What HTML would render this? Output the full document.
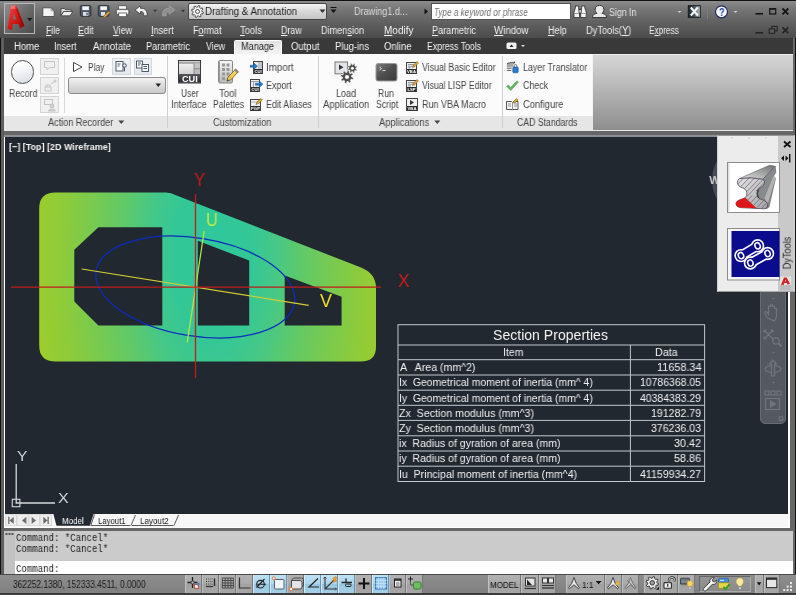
<!DOCTYPE html>
<html><head><meta charset="utf-8"><title>AutoCAD</title>
<style>
*{box-sizing:border-box;margin:0;padding:0}
html,body{width:796px;height:595px;overflow:hidden;background:#3c3c3c;font-family:"Liberation Sans",sans-serif;font-size:10px;}
#root{position:relative;width:796px;height:595px;overflow:hidden;background:#666}
#root>div,#root>svg{position:absolute}
.t{position:absolute;white-space:pre;line-height:1;transform-origin:0 50%;will-change:transform;}
#title{left:0;top:0;width:796px;height:38px;background:linear-gradient(#111 0,#111 1.500px,#8a8a8a 1.500px,#797979 8px,#646464 20px,#565656 30px,#4c4c4c 38px)}
#tabs{left:0;top:38px;width:796px;height:16px;background:#393939}
#ribbon{left:3.500px;top:54px;width:589.500px;height:76px;background:#fbfbfb}
#ribbonrest{left:592px;top:54px;width:200.500px;height:76.500px;background:linear-gradient(#d6d6d6,#b2b2b2 50%,#8e8e8e);border-left:1.500px solid #f4f4f4;border-top:1px solid #eee;border-bottom:1px solid #e4e4e4}
#ptitles{left:3.500px;top:116px;width:589.500px;height:14px;background:#e6e6e6}
.vsep{width:1px;background:#cfcfcf;top:56px;height:72px}
#strip{left:0;top:130px;width:796px;height:5px;background:#666;border-top:1px solid #e8e8e8}
#frame{left:4px;top:134.500px;width:786px;height:393.500px;background:#fff;border-top:2px solid #8c9094}
#draw{left:5px;top:136.500px;width:783px;height:377.500px;background:#212830;overflow:hidden}
#rightedge{left:790px;top:131px;width:6px;height:444px;background:#666;border-right:1px solid #111}
#ltabs{left:5px;top:514px;width:783px;height:12.500px;background:#f7f7f7}
#cmdhist{left:4px;top:531px;width:789px;height:30px;background:#cbcbcb}
#cmdgrip{left:4px;top:531px;width:11px;height:44px;background:#c2c2c2}
#cmdline{left:15px;top:561px;width:778px;height:14px;background:#fff}
#status{left:0;top:575px;width:796px;height:20px;background:linear-gradient(#8e8e8e,#868686 50%,#7e7e7e)}
.sb{top:575px;width:17px;height:17.500px;border-right:1px solid #787878;border-left:1px solid #c0c0c0;background:linear-gradient(#b2b2b2,#aaa 48%,#a2a2a2 52%,#a6a6a6);}
.sb.on{background:linear-gradient(#bfe0f2,#aed6ec 48%,#98c8e0 52%,#a4d0e6);border-right-color:#6a94b0;border-left-color:#d4ecf8}
.rb{border:1px solid #d4d4d4;background:#f0f0f0}
</style></head><body>
<div id="root">
<div id="title"></div>
<div id="tabs"></div>
<div id="ribbon"></div>
<div id="ribbonrest"></div>
<div id="ptitles"></div>
<div class="vsep" style="left:167px"></div>
<div class="vsep" style="left:318px"></div>
<div class="vsep" style="left:502px"></div>
<div id="strip"></div>
<div id="frame"></div>
<div id="draw"></div>
<div id="rightedge"></div>
<div id="ltabs"></div>
<div id="cmdhist"></div>
<div id="cmdgrip"></div>
<div id="cmdline"></div>
<div id="status"></div>
<div style="left:793px;top:38px;width:3px;height:537px;background:#686868;border-right:1px solid #111"></div>
<div style="left:0;top:38px;width:3.500px;height:537px;background:#5e5e5e;border-left:1px solid #111"></div>
<div style="left:4px;top:3px;width:31px;height:31px;border:1px solid #b8b8b8;background:linear-gradient(135deg,#909090,#6a6a6a 50%,#4c4c4c)"></div>
<svg style="left:5px;top:4px" width="29" height="29" viewBox="0 0 29 29">
<defs><linearGradient id="ag" x1="0" y1="0" x2="1" y2="1"><stop offset="0" stop-color="#f05050"/><stop offset="0.5" stop-color="#d81818"/><stop offset="1" stop-color="#8c0808"/></linearGradient></defs>
<path d="M6 1.600 L11.300 1.600 L19.500 22 L15 24.500 L13.300 20 L7.800 20 L7 26 L2.500 25 Z M8.700 9.500 L8 15.500 L11.700 15.500 Z" fill="url(#ag)" fill-rule="evenodd"/>
<path d="M6 1.600 L11.300 1.600 L12.500 4.500 L5.600 5 Z" fill="#ff9a9a" opacity=".55"/>
<path d="M11.300 1.600 L19.500 22 L17.500 23 L10 3z" fill="#7a0606" opacity=".45"/>
<path d="M22 14 h5.500 l-2.750 3.200z" fill="#1a1a1a"/>
</svg>
<div style="left:188px;top:3px;width:139px;height:17px;border:1px solid #444;border-radius:2px;background:linear-gradient(#f4f4f4,#d8d8d8 50%,#c4c4c4)"></div>
<svg style="left:190.5px;top:5px" width="13" height="13" viewBox="0 0 13 13"><path d="M10.90 6.50 L12.44 7.35 L12.04 8.80 L10.29 8.74 L9.61 9.61 L10.10 11.30 L8.80 12.04 L7.59 10.76 L6.50 10.90 L5.65 12.44 L4.20 12.04 L4.26 10.29 L3.39 9.61 L1.70 10.10 L0.96 8.80 L2.24 7.59 L2.10 6.50 L0.56 5.65 L0.96 4.20 L2.71 4.26 L3.39 3.39 L2.90 1.70 L4.20 0.96 L5.41 2.24 L6.50 2.10 L7.35 0.56 L8.80 0.96 L8.74 2.71 L9.61 3.39 L11.30 2.90 L12.04 4.20 L10.76 5.41Z" fill="#f4f4f4" stroke="#505050" stroke-width="1" stroke-linejoin="round"/><circle cx="6.5" cy="6.5" r="2" fill="#f4f4f4" stroke="#505050" stroke-width="1"/></svg>
<svg style="left:319px;top:9px" width="8" height="5"><path d="M0.5 0.5h6l-3 3.5z" fill="#333"/></svg>
<svg style="left:330px;top:7px" width="8" height="8"><path d="M0.5 0.5h6" stroke="#111" stroke-width="1"/><path d="M0.5 2.5h6l-3 3.5z" fill="#111"/></svg>
<svg style="left:424px;top:8px" width="5" height="8"><path d="M0.5 0.5v6l3.5-3z" fill="#111"/></svg>
<div style="left:431px;top:3px;width:139.500px;height:17px;border:1px solid #555;background:#fff"></div>
<svg style="left:40px;top:3px" width="145" height="18" viewBox="40 3 145 18">
<path d="M42.800 7.800h8.200l3.200 3v5.700h-11.400z" fill="#f4f4f4" stroke="#4a4a4a" stroke-width=".9"/><path d="M51 7.800v3h3.200" fill="none" stroke="#777" stroke-width=".7"/>
<path d="M61 8.500h3.500l1 1.200h5.500v1.800h-7.500l-2.500 4.300z" fill="#dcdcdc" stroke="#3c3c3c" stroke-width=".8"/><path d="M63.800 11.500h9l-2.800 4.300h-9z" fill="#f0f0f0" stroke="#3c3c3c" stroke-width=".8"/>
<rect x="80.300" y="5.500" width="10.600" height="10.800" rx="1.300" fill="#4e5868" stroke="#2c3038" stroke-width=".9"/><rect x="82.300" y="6.300" width="6.600" height="3.800" fill="#f4f4f4"/><rect x="83" y="12" width="5.400" height="3.800" fill="#e0e0e0"/><rect x="86.300" y="12.700" width="1.400" height="2.400" fill="#4e5868"/>
<rect x="98.300" y="5.500" width="10.600" height="10.800" rx="1.300" fill="#4e5868" stroke="#2c3038" stroke-width=".9"/><rect x="100.300" y="6.300" width="6.600" height="3.800" fill="#f4f4f4"/><rect x="101" y="12" width="4" height="3.800" fill="#e0e0e0"/><path d="M103.500 17.500l0.600-2 4.500-4.300 1.400 1.400-4.500 4.300z" fill="#e8a848" stroke="#7a5a20" stroke-width=".5"/>
<rect x="118.500" y="5.800" width="8" height="4" fill="#f8f8f8" stroke="#444" stroke-width=".7"/><rect x="116.300" y="9.300" width="12.600" height="5.200" rx="1.300" fill="#e4e4e4" stroke="#3a3a3a" stroke-width=".8"/><path d="M117 11.500h11" stroke="#fff" stroke-width="1"/><rect x="118.800" y="13" width="7.500" height="3.700" fill="#fff" stroke="#444" stroke-width=".7"/>
<path d="M135 10l5.500-4.200v2.500c4.800 0 7 2.400 6.600 7.500h-3.300c0.200-3.200-0.800-4.300-3.300-4.300v2.600z" fill="#f2f2f2" stroke="#3c3c3c" stroke-width=".8"/>
<path d="M153 9.800h4.200l-2.100 2.500z" fill="#3a3a3a"/>
<path d="M174.800 10l-5.500-4.200v2.500c-4.800 0-7 2.400-6.600 7.500h3.300c-0.200-3.200 0.800-4.300 3.300-4.300v2.600z" fill="#8e8e8e" stroke="#a4a4a4" stroke-width=".8"/>
<path d="M181 9.800h4.200l-2.100 2.500z" fill="#3a3a3a"/>
</svg>
<svg style="left:570px;top:2px" width="226" height="36" viewBox="570 2 226 36">
<g fill="#f4f4f4" stroke="#2c2c2c" stroke-width=".8"><path d="M574 17.500v-5.500l1.500-4.500v-1.500h3v1.500l1 4v6z"/><path d="M586.200 17.500v-5.500l-1.500-4.500v-1.500h-3v1.500l-1 4v6z"/><rect x="579" y="9.500" width="2.200" height="3.500"/></g><path d="M574.500 13.500h4.500M581.200 13.500h4.500" stroke="#888" stroke-width=".8"/>
<path d="M592.500 17.500c0-2.800 1.800-3.600 4.500-4.200-1.200-1-1.800-2.300-1.800-3.900 0-2.400 1.600-4 4.300-4s4.300 1.600 4.300 4c0 1.600-.6 2.900-1.800 3.900 2.700.6 4.500 1.400 4.500 4.200z" fill="#e8e8e8" stroke="#2c2c2c" stroke-width=".9"/>
<path d="M677.500 11h4l-2 2z" fill="#d0d0d0"/>
<defs><linearGradient id="xg" x1="0" y1="0" x2="1" y2="0"><stop offset="0" stop-color="#1e2a32"/><stop offset="0.45" stop-color="#42525c"/><stop offset="1" stop-color="#b8c4cc"/></linearGradient></defs>
<rect x="688.300" y="5.700" width="12" height="11.600" fill="url(#xg)" stroke="#1a1a1a" stroke-width="1"/><path d="M690.800 7.500l7 8M697.800 7.500l-7 8" stroke="#fafafa" stroke-width="2"/>
<path d="M707.500 5v14" stroke="#7c7c7c" stroke-width="1"/>
<circle cx="721.500" cy="11.800" r="6" fill="#f6f6f6" stroke="#1c2a5c" stroke-width="1.200"/>
<path d="M733.500 11h4l-2 2z" fill="#d0d0d0"/>
<path d="M755.500 13.800h7.500" stroke="#1a1a1a" stroke-width="1.800"/>
<rect x="769.700" y="8.700" width="6" height="5.300" fill="none" stroke="#1a1a1a" stroke-width="1.300"/><path d="M769.700 8.900h6" stroke="#1a1a1a" stroke-width="1.800"/>
<path d="M782.500 8.500l5.800 5.800M788.300 8.500l-5.800 5.800" stroke="#161616" stroke-width="1.900"/>
<path d="M755.500 32.800h7.500" stroke="#242424" stroke-width="1.700"/>
<rect x="771.800" y="26.300" width="5.400" height="4.500" fill="none" stroke="#242424" stroke-width="1.100"/><rect x="769.200" y="28.800" width="5.400" height="4.500" fill="#5a5a5a" stroke="#242424" stroke-width="1.100"/>
<path d="M782.500 27.300l5.800 5.800M788.300 27.300l-5.800 5.800" stroke="#242424" stroke-width="1.700"/>
</svg>
<div style="left:234px;top:40px;width:48px;height:14px;background:linear-gradient(#e0e0e0,#f4f4f4);border:1px solid #fff;border-bottom:none;border-radius:2px 2px 0 0"></div>
<svg style="left:506px;top:42px" width="22" height="8" viewBox="0 0 22 8"><rect x="0.500" y="0.500" width="10" height="6.500" rx="1.500" fill="#f0f0f0"/><path d="M3.500 5l2-2.500 2 2.500z" fill="#222"/><path d="M15 3h4l-2 2z" fill="#ddd"/></svg>
<div style="left:10.800px;top:60px;width:23.600px;height:23.600px;border-radius:50%;border:1.700px solid #505050;background:linear-gradient(160deg,#fff 20%,#eef0f4 55%,#d4d8e0)"></div>
<div class="rb" style="left:40.300px;top:58.3px;width:18.500px;height:17px"></div>
<div class="rb" style="left:40.300px;top:77px;width:18.500px;height:17px"></div>
<div class="rb" style="left:40.300px;top:95.8px;width:18.500px;height:17px"></div>
<svg style="left:41px;top:58px" width="17" height="55" viewBox="41 58 17 55" fill="none" stroke="#c4c4c4" stroke-width="1">
<path d="M44.500 61.500h10v6h-5l-2.500 2.500v-2.500h-2.500z"/>
<path d="M45 87h6v4h-6zM46 87v-2h4v2M51 84l4-3"/><circle cx="55" cy="81" r="1"/>
<rect x="44.500" y="99.500" width="8" height="5"/><circle cx="52" cy="106" r="2" fill="#d0d0d0"/><path d="M48.500 111c0-2.500 7-2.500 7 0z" fill="#d0d0d0"/>
</svg>
<div style="left:63.500px;top:58px;width:1px;height:55px;background:#d8d8d8"></div>
<svg style="left:72px;top:61px" width="12" height="12" viewBox="0 0 12 12"><path d="M1.500 1.500v9l8.500-4.500z" fill="#fff" stroke="#444" stroke-width="1"/></svg>
<div style="left:112px;top:58px;width:18.500px;height:17px;border:1px solid #d2d8de;background:linear-gradient(#f0f3f6,#e4e9ee)"></div>
<div style="left:133.5px;top:58px;width:18.500px;height:17px;border:1px solid #d2d8de;background:linear-gradient(#f0f3f6,#e4e9ee)"></div>
<svg style="left:112px;top:58px" width="40" height="17" viewBox="112 58 40 17" fill="none" stroke="#3a4a5a" stroke-width=".9">
<rect x="116" y="61.500" width="7" height="9.500" fill="#fff"/><path d="M117.500 64h3M117.500 66h2"/><circle cx="124.500" cy="65.500" r="1.800" fill="#dfe6ec"/><path d="M124.500 67.300v4"/>
<rect x="136.500" y="61" width="6" height="7" fill="#fff"/><rect x="142" y="64.500" width="6.500" height="7" fill="#fff"/><path d="M138 63h3M138 65h2M143.500 66.500h3.500M143.500 68.500h3.500"/>
</svg>
<div style="left:68px;top:77px;width:98px;height:16.500px;border:1px solid #8c8c8c;border-radius:3px;background:linear-gradient(#f2f2f2,#dcdcdc 50%,#c8c8c8)"></div>
<svg style="left:155px;top:83px" width="7" height="5"><path d="M0.500 0.500h5.500l-2.750 3.500z" fill="#222"/></svg>
<svg style="left:118px;top:120px" width="7" height="5"><path d="M0.300 0.500h6l-3 3.500z" fill="#444"/></svg>
<svg style="left:176px;top:58px" width="90" height="56" viewBox="176 58 90 56">
<defs><linearGradient id="cg" x1="0" y1="0" x2="0" y2="1"><stop offset="0" stop-color="#f8f8f8"/><stop offset="1" stop-color="#b8b8b8"/></linearGradient></defs>
<rect x="178.500" y="60.500" width="22" height="22.500" fill="url(#cg)" stroke="#3a3a3a" stroke-width="1"/>
<rect x="179" y="61" width="21" height="1.800" fill="#d0d0d0"/>
<path d="M179 63h21" stroke="#555" stroke-width=".8"/>
<rect x="194.300" y="63.400" width="5.700" height="5" fill="#c4c4c4"/><rect x="194.300" y="69" width="5.700" height="5" fill="#bcbcbc"/>
<path d="M194 63.400v10.600M194 68.700h6" stroke="#777" stroke-width=".8" fill="none"/>
<rect x="179" y="74" width="21" height="8.500" fill="url(#cb)"/>
<defs><linearGradient id="cb" x1="0" y1="0" x2="0" y2="1"><stop offset="0" stop-color="#55585c"/><stop offset="1" stop-color="#26282c"/></linearGradient></defs>
<rect x="218.500" y="60.500" width="14" height="22.500" rx="1.500" fill="url(#cg)" stroke="#8a8a8a" stroke-width="1"/>
<path d="M219.500 61.500v20.500" stroke="#9a9a9a" stroke-width="1"/>
<g fill="#989898"><rect x="222" y="63.500" width="3" height="3"/><rect x="226.500" y="63.500" width="3" height="3"/><rect x="222" y="68" width="3" height="3"/><rect x="226.500" y="68" width="3" height="3"/><rect x="222" y="72.500" width="3" height="3"/><rect x="226.500" y="72.500" width="3" height="3"/><rect x="222" y="77" width="3" height="3"/></g>
<path d="M227 81l1-3.800 7.500-8 2.800 2.600-7.500 8z" fill="#f0d058" stroke="#6a5420" stroke-width=".8"/><path d="M229 76.200l2.800 2.600" stroke="#b89030" stroke-width=".6"/><path d="M227 81l.5-2 1.500 1.400z" fill="#333"/><path d="M234.500 70.200l2.800 2.600 1-1.100-2.800-2.600z" fill="#9a9a9a" stroke="#555" stroke-width=".5"/>
</svg>
<svg style="left:250px;top:60.5px;will-change:transform" width="13" height="13" viewBox="0 0 13 13"><rect x="3.500" y="0.500" width="9" height="12" fill="#e8ecf0" stroke="#444" stroke-width="1"/><path d="M9 1v7M11 1v7" stroke="#8a9098" stroke-width=".8"/><rect x="4" y="8" width="8" height="4.500" fill="#2a2a2a"/><text x="8" y="12" text-anchor="middle" font-family="'Liberation Sans',sans-serif" font-weight="bold" font-size="4.2" fill="#fff">CUI</text><path d="M0 4.200h4v-2l3.500 3-3.500 3v-2h-4z" fill="#2a7ad0" stroke="#14508c" stroke-width=".5"/></svg>
<svg style="left:250px;top:78.7px;will-change:transform" width="13" height="13" viewBox="0 0 13 13"><rect x="0.500" y="0.500" width="9" height="12" fill="#e8ecf0" stroke="#444" stroke-width="1"/><path d="M1 2.500h8M3.500 2.500v5.500" stroke="#8a9098" stroke-width=".8"/><rect x="1" y="8" width="8" height="4.500" fill="#2a2a2a"/><text x="5" y="12" text-anchor="middle" font-family="'Liberation Sans',sans-serif" font-weight="bold" font-size="4.2" fill="#fff">CUI</text><path d="M5.500 4.200h4v-2l3.500 3-3.500 3v-2h-4z" fill="#2a7ad0" stroke="#14508c" stroke-width=".5"/></svg>
<svg style="left:250px;top:97.5px;will-change:transform" width="13" height="13" viewBox="0 0 13 13"><rect x="0.500" y="1.500" width="10" height="11" fill="#eef0f2" stroke="#444" stroke-width="1"/><path d="M1 4h9" stroke="#a0a4a8" stroke-width=".8"/><rect x="1" y="8" width="9" height="4.500" fill="#2a2a2a"/><text x="5.5" y="12" text-anchor="middle" font-family="'Liberation Sans',sans-serif" font-weight="bold" font-size="4.2" fill="#fff">PGP</text><path d="M6 6.500l1-2.500 4-3.500 1.500 1.500-4 3.500z" fill="#e8a838" stroke="#6a4a18" stroke-width=".5"/></svg>
<svg style="left:332px;top:58px" width="70" height="28" viewBox="332 58 70 28">
<rect x="335" y="62" width="12.500" height="11.800" fill="#e2e6ea" stroke="#777" stroke-width="1"/><path d="M339 64.500v5.500l4.500-2.750z" fill="#333"/>
<path d="M355.73 68.88 L357.16 69.73 L356.55 70.99 L354.99 70.40 L354.28 71.03 L354.69 72.65 L353.36 73.11 L352.68 71.59 L351.72 71.53 L350.87 72.96 L349.61 72.35 L350.20 70.79 L349.57 70.08 L347.95 70.49 L347.49 69.16 L349.01 68.48 L349.07 67.52 L347.64 66.67 L348.25 65.41 L349.81 66.00 L350.52 65.37 L350.11 63.75 L351.44 63.29 L352.12 64.81 L353.08 64.87 L353.93 63.44 L355.19 64.05 L354.60 65.61 L355.23 66.32 L356.85 65.91 L357.31 67.24 L355.79 67.92Z" fill="#4c4c4c" stroke="#fbfbfb" stroke-width=".6"/><circle cx="352.400" cy="68.200" r="1.500" fill="#fbfbfb"/>
<path d="M351.60 77.00 L353.56 77.72 L353.10 79.53 L351.03 79.22 L350.25 80.25 L351.13 82.15 L349.53 83.10 L348.28 81.42 L347.00 81.60 L346.28 83.56 L344.47 83.10 L344.78 81.03 L343.75 80.25 L341.85 81.13 L340.90 79.53 L342.58 78.28 L342.40 77.00 L340.44 76.28 L340.90 74.47 L342.97 74.78 L343.75 73.75 L342.87 71.85 L344.47 70.90 L345.72 72.58 L347.00 72.40 L347.72 70.44 L349.53 70.90 L349.22 72.97 L350.25 73.75 L352.15 72.87 L353.10 74.47 L351.42 75.72Z" fill="#4c4c4c" stroke="#fbfbfb" stroke-width=".6"/><circle cx="347" cy="77" r="2.100" fill="#fbfbfb"/>
<defs><linearGradient id="rs" x1="0" y1="0" x2="1" y2="1"><stop offset="0" stop-color="#7c7c7c"/><stop offset="0.500" stop-color="#4e4e4e"/><stop offset="1" stop-color="#3a3a3a"/></linearGradient></defs>
<rect x="376" y="63.500" width="21" height="17.500" rx="2" fill="url(#rs)" stroke="#9a9a9a" stroke-width="1"/>
<path d="M379.500 67l2 1.500-2 1.500M382.500 70.500h3" stroke="#eee" stroke-width=".9" fill="none"/>
</svg>
<svg style="left:405.5px;top:60.5px;will-change:transform" width="13" height="13" viewBox="0 0 13 13"><rect x="0.500" y="1.500" width="10" height="11" fill="#eef0f2" stroke="#444" stroke-width="1"/><path d="M2 3.500h6M2 5.200h5M2 6.800h3" stroke="#70747a" stroke-width=".7"/><rect x="1" y="8" width="9" height="4.500" fill="#2a2a2a"/><text x="5.5" y="12" text-anchor="middle" font-family="'Liberation Sans',sans-serif" font-weight="bold" font-size="4.2" fill="#fff">VBA</text><path d="M6.500 6.500l1-2.500 3.500-3.500 1.500 1.500-3.500 3.500z" fill="#e8a838" stroke="#6a4a18" stroke-width=".5"/></svg>
<svg style="left:405.5px;top:78.7px;will-change:transform" width="13" height="13" viewBox="0 0 13 13"><rect x="0.500" y="1.500" width="10" height="11" fill="#eef0f2" stroke="#444" stroke-width="1"/><path d="M2 3.500h6M2 5.200h5M2 6.800h3" stroke="#70747a" stroke-width=".7"/><rect x="1" y="8" width="9" height="4.500" fill="#2a2a2a"/><text x="5.5" y="12" text-anchor="middle" font-family="'Liberation Sans',sans-serif" font-weight="bold" font-size="4.2" fill="#fff">LSP</text><path d="M6.500 6.500l1-2.500 3.500-3.500 1.500 1.500-3.500 3.500z" fill="#e8a838" stroke="#6a4a18" stroke-width=".5"/></svg>
<svg style="left:405.5px;top:97.5px;will-change:transform" width="13" height="13" viewBox="0 0 13 13"><rect x="0.500" y="0.500" width="11" height="12" fill="#eef0f2" stroke="#444" stroke-width="1"/><rect x="1" y="8" width="10" height="4.500" fill="#2a2a2a"/><text x="6" y="12" text-anchor="middle" font-family="'Liberation Sans',sans-serif" font-weight="bold" font-size="4.2" fill="#fff">VBA</text><path d="M4 2v5l4-2.500z" fill="#333"/></svg>
<svg style="left:434px;top:120px" width="7" height="5"><path d="M0.300 0.500h6l-3 3.500z" fill="#444"/></svg>
<svg style="left:506.3px;top:60.5px;will-change:transform" width="13" height="13" viewBox="0 0 13 13"><path d="M2.500 2l6.500-1-1.500 2h-6.500zM0.800 5h6.500M0.800 7.200h5M0.800 9.400h4.500" stroke="#444" stroke-width=".9" fill="none"/><rect x="6.800" y="6" width="5.400" height="5.800" rx="1" fill="#2a7ad0" stroke="#14508c" stroke-width=".6"/><path d="M8.200 6v-1.200a1.300 1.300 0 0 1 2.600 0v1.200" fill="none" stroke="#555" stroke-width=".8"/></svg>
<svg style="left:506.3px;top:78.7px;will-change:transform" width="13" height="13" viewBox="0 0 13 13"><path d="M0.800 7.400l1.500-1.500 2.500 2.600 6.200-6.700 1.300 1.300-7.500 8.500z" fill="#5cba5c" stroke="#3c8a3c" stroke-width=".5"/></svg>
<svg style="left:506.3px;top:97.5px;will-change:transform" width="13" height="13" viewBox="0 0 13 13"><path d="M0.500 3.500h5l1 1 1-1h4.500v8h-5l-0.500 0.700-0.500-0.700h-5.500z" fill="#f4f4f4" stroke="#444" stroke-width=".9"/><path d="M2 6h3M2 8h3M8 6h3M8 8h3M6.500 4.500v7" stroke="#666" stroke-width=".7"/><path d="M7.500 5l0.500-2 2.500-2.500 1.500 1.500-2.500 2.500z" fill="#e8a030" stroke="#6a4a18" stroke-width=".5"/></svg>
<svg style="left:5px;top:136px;will-change:transform" width="783" height="379" viewBox="5 136 783 379">
<defs>
<radialGradient id="sg" gradientUnits="userSpaceOnUse" cx="0" cy="0" r="200" gradientTransform="translate(212 255) scale(1 2.2)">
<stop offset="0" stop-color="#2ec79c"/><stop offset="0.2" stop-color="#34c796"/><stop offset="0.32" stop-color="#46c886"/><stop offset="0.45" stop-color="#60c968"/><stop offset="0.6" stop-color="#78ca50"/><stop offset="0.75" stop-color="#8ecb3a"/><stop offset="0.9" stop-color="#9ecd2a"/>
</radialGradient>
</defs>
<path fill="url(#sg)" fill-rule="evenodd" d="M55.500 192.500 L166 192.500 Q171 192.500 176 195.300 L361 267.500 Q376 273.500 376 288 L376 347 Q376 361.500 361 361.500 L55.500 361.500 Q39.200 361.500 39.200 345.500 L39.200 208.500 Q39.200 192.500 55.500 192.500 Z
M98.400 227.300 L162.300 227.300 L162.300 325.500 L98.400 325.500 L74.300 301.600 L74.300 249.800 Z
M197.800 240.700 L249.200 260.600 L249.200 325.400 L197.800 325.400 Z
M284.700 275.400 L341.600 296.800 L341.600 325.400 L284.700 325.400 Z"/>
<ellipse cx="195.3" cy="287.0" rx="100.500" ry="49" fill="none" stroke="#0c2cbc" stroke-width="1.300" transform="rotate(9.1 195.3 287.0)"/>
<path d="M81.700 269 L308.700 305.300" stroke="#d4cc34" stroke-width="1.250"/>
<path d="M204.200 231 L187.200 342.500" stroke="#b8e840" stroke-width="1.250"/>
<path d="M11 287.200 H381" stroke="#c01c1c" stroke-width="1.300"/>
<path d="M195.500 194 V378" stroke="#c01c1c" stroke-width="1.300"/>
<circle cx="751" cy="180" r="36" fill="none" stroke="#474c54" stroke-width="6"/>
<text x="709.300" y="184" font-family="'Liberation Sans',sans-serif" font-weight="bold" font-size="11.500" fill="#c4c6c8">W</text>
<!-- UCS icon -->
<g stroke="#d4d8dc" stroke-width="1.300" fill="none"><path d="M16.200 464 V503 H55"/><rect x="12.300" y="499.300" width="7.600" height="7.400" stroke-width="1.100"/></g>
</svg>
<svg style="left:390px;top:318px" width="320" height="170" viewBox="390 318 320 170"><g stroke="#c4c8cc" stroke-width="1" fill="none"><rect x="398" y="324.7" width="306.6" height="156.8"/><path d="M398 345H704.6"/><path d="M398 359.7H704.6"/><path d="M398 375H704.6"/><path d="M398 390.2H704.6"/><path d="M398 405.3H704.6"/><path d="M398 420.4H704.6"/><path d="M398 435.8H704.6"/><path d="M398 451H704.6"/><path d="M398 466.2H704.6"/><path d="M630.4 345V481.5"/></g></svg>
<svg style="left:760px;top:290px" width="27" height="135" viewBox="760 290 27 135">
<path d="M760.500 290V419a4.500 4.500 0 0 0 4.500 4.500h16a4.500 4.500 0 0 0 4.500-4.500V290z" fill="#54595f" stroke="#676c72" stroke-width="1"/>
<g fill="none" stroke="#71767c" stroke-width="1.200">
<path d="M772 298h3l-1.500 1.500z" fill="#71767c" stroke="none"/>
<path d="M767.500 318c-2-3-3.500-5-2.500-6s2.500 1 3.500 2.500v-7.500c0-1.500 2-1.500 2 0v-1.500c0-1.500 2-1.500 2 0v1.500c0-1.500 2-1.500 2 0v2c0-1.300 2-1.300 2 0v7c0 2-1 3.500-2 5z"/>
<path d="M764 330l9 9M773 330l-9 9M764 330h2.500M764 330v2.500M773 330h-2.500M773 330v2.500M764 339h2.500M764 339v-2.500"/><circle cx="776" cy="341" r="3.200"/><path d="M778.500 343.500l3 3" stroke-width="1.800"/>
<path d="M772 352h3l-1.500 1.500z" fill="#71767c" stroke="none"/>
<ellipse cx="773" cy="369" rx="8" ry="3.500"/><path d="M771.500 376v-12h-2l3.500-4 3.500 4h-2v12z" fill="#54595f"/>
<path d="M772 382h3l-1.500 1.500z" fill="#71767c" stroke="none"/>
<rect x="765" y="391" width="4" height="4"/><rect x="771" y="391" width="4" height="4"/><rect x="777" y="391" width="4" height="4"/>
<rect x="765.500" y="398.500" width="14" height="11"/><path d="M770.500 401v6l5-3z" fill="#71767c"/>
<circle cx="781" cy="418.500" r="2"/>
</g></svg>
<div style="left:717px;top:135px;width:78px;height:157px;background:#ececec;border:1px solid #d4d4d4;border-top:1px solid #999;border-bottom-color:#aaa"></div>
<div style="left:778px;top:136px;width:16px;height:155px;background:#c9c9c9"></div>
<svg style="left:718px;top:136px" width="76" height="155" viewBox="718 136 76 155">
<path d="M784 141.500l6.500 5.500M790.500 141.500l-6.500 5.500" stroke="#111" stroke-width="1.800"/>
<path d="M781 158.200l3-2.700v5.400zM788.500 158.200l-3-2.700v5.400z" fill="#111"/><path d="M789.700 154v8.500" stroke="#111" stroke-width="1.400"/>
<path d="M732 137v1.500M749 137v1.500M766 137v1.500" stroke="#bbb" stroke-width="1"/>
<!-- icon 1 : rail -->
<defs><linearGradient id="rt" x1="0" y1="1" x2="1" y2="0"><stop offset="0" stop-color="#e4e4e4"/><stop offset="1" stop-color="#6c7070"/></linearGradient><linearGradient id="rf" x1="0" y1="0" x2="1" y2="1"><stop offset="0" stop-color="#e6e6e6"/><stop offset="1" stop-color="#a4a4a4"/></linearGradient></defs>
<rect x="727.500" y="162.500" width="52" height="50" fill="#fff" stroke="#8c8c8c" stroke-width="1"/>
<path d="M728.800 163.500v48" stroke="#e0e0e0" stroke-width="1.600"/>
<path d="M739.500 178.500 L769.800 165.200 L775.200 166.300 L762.800 179.300 Q751 177 739.500 178.500 Z" fill="url(#rt)" stroke="#5c5c5c" stroke-width=".6"/>
<path d="M762.800 179.300 L775.200 166.300 L775.800 172.500 L773.500 176 L775.500 178.500 L769 207 L766.500 208.800 L758 198 L757 190 Z" fill="#868a8c" stroke="#4a4a4a" stroke-width=".5"/>
<path d="M773.500 176 L764.500 198 L767.500 204.500 L775.500 178.500z" fill="#b2b2b2"/>
<path d="M739.500 178.500 Q751 177 762.800 179.300 Q765 181 764.400 183.500 Q763.500 186.500 760.400 187.800 Q757.200 189 757 192 Q756.800 195.500 757.800 197.300 Q760 199.300 763 200 Q767.200 201.500 767.700 204.500 Q768 208 765 208.800 L740 207.600 Q736 206.800 735.900 203.500 Q736.300 200.800 739.500 199.900 Q745.500 198.500 746.700 195.800 Q747.200 192.500 746.200 190.500 Q744.500 188 740.500 187 Q737.300 185.500 737.400 182.300 Q737.600 179.500 739.500 178.500 Z" fill="url(#rf)" stroke="#4a4458" stroke-width=".8"/>
<path d="M735.900 203.500 Q736.300 200.800 739.500 199.900 Q743.500 199 745.200 197.500 L756.500 208.300 L740 207.600 Q736 206.800 735.900 203.500z" fill="#e01616"/>
<path d="M738 184l5.500-6M740.500 187l9-9.500M744.500 188.500l10.500-11M747 191.500l12.500-13M747 196.500l16-17M746 202l6-6.500M756 191l8-8.500M749.500 204l8-8.500M753 206l7-7.500M757 207.500l7.500-8M761.500 208.500l5.500-6" stroke="#6a5a7a" stroke-width=".7" fill="none"/>
<path d="M758.500 189.500q-2.200 4 0 8.500" stroke="#2c2c2c" stroke-width=".9" fill="none"/>
<!-- icon 2 : chain -->
<rect x="727.500" y="228.500" width="52" height="51.500" fill="#f4f4f4" stroke="#8c8c8c" stroke-width="1"/>
<rect x="731.500" y="231" width="48" height="46" fill="#0b0b8e"/>
<g stroke="#fff" fill="#fff"><circle cx="741" cy="255.6" r="6.700" stroke="none"/><circle cx="757.6" cy="245.8" r="6.700" stroke="none"/><path d="M741 255.6L757.6 245.8" stroke-width="10" fill="none"/></g><g stroke="#0b0b8e" fill="#0b0b8e"><circle cx="741" cy="255.6" r="5.100" stroke="none"/><circle cx="757.6" cy="245.8" r="5.100" stroke="none"/><path d="M741 255.6L757.6 245.8" stroke-width="6.800" fill="none"/></g><g stroke="#fff" fill="none" stroke-width="1.500"><ellipse cx="741" cy="255.6" rx="2.600" ry="3.200" transform="rotate(-25 741 255.6)"/><ellipse cx="757.6" cy="245.8" rx="2.600" ry="3.200" transform="rotate(-25 757.6 245.8)"/></g><g stroke="#fff" fill="#fff"><circle cx="750.4" cy="263" r="6.700" stroke="none"/><circle cx="767.6" cy="253.5" r="6.700" stroke="none"/><path d="M750.4 263L767.6 253.5" stroke-width="10" fill="none"/></g><g stroke="#0b0b8e" fill="#0b0b8e"><circle cx="750.4" cy="263" r="5.100" stroke="none"/><circle cx="767.6" cy="253.5" r="5.100" stroke="none"/><path d="M750.4 263L767.6 253.5" stroke-width="6.800" fill="none"/></g><g stroke="#fff" fill="none" stroke-width="1.500"><ellipse cx="750.4" cy="263" rx="2.600" ry="3.200" transform="rotate(-25 750.4 263)"/><ellipse cx="767.6" cy="253.5" rx="2.600" ry="3.200" transform="rotate(-25 767.6 253.5)"/></g>
<rect x="780" y="276.500" width="11" height="14" fill="#e4e4e4"/><path d="M780 285h11v5.500h-11z" fill="#bdbdbd"/><path d="M781 284.800l3-7.300h2.600l3.400 6.300-2.300 1-.8-1.700h-2.800l-.6 2.200z M784.800 281.300h1.500l-.7-1.600z" fill="#d42222" fill-rule="evenodd"/>
</svg>
<div style="left:779px;top:245px;width:16px;height:16px"><span style="position:absolute;left:8px;top:8px;white-space:nowrap;font-size:10.500px;color:#222;line-height:1;will-change:transform;transform:translate(-50%,-50%) rotate(-90deg) scaleX(.87)">DyTools</span></div>
<div style="left:718px;top:291px;width:43px;height:1px;background:#999"></div>
<svg style="left:5px;top:514px" width="180" height="13" viewBox="5 514 180 13">
<g fill="#eeeeee" stroke="#cfcfcf" stroke-width=".7"><rect x="5.700" y="514.700" width="10.800" height="11"/><rect x="17" y="514.700" width="11.300" height="11"/><rect x="28.900" y="514.700" width="10.800" height="11"/><rect x="40.200" y="514.700" width="11.300" height="11"/></g>
<g fill="#6c6c6c" stroke="none">
<path d="M8.200 516.800h1.300v7.200h-1.300zM13.700 516.800v7.200l-4.200-3.600z"/>
<path d="M26.400 516.800v7.200l-4.400-3.600z"/>
<path d="M31.600 516.800v7.200l4.400-3.600z"/>
<path d="M43.300 516.800v7.200l4.200-3.600zM47.500 516.800h1.300v7.200h-1.300z"/>
</g>
<path d="M53.400 514h40.200l-3.800 11.800h-33.300z" fill="#212830"/>
<path d="M94.500 514.500l-3.700 11h39.500M135.500 515l-4.500 10.500M132 525.500h41.500M178.500 515l-4.500 10.500" fill="none" stroke="#5a5a5a" stroke-width="1"/>
</svg>
<svg style="left:5px;top:532px" width="9" height="5"><g fill="#555"><rect x="0.500" y="1" width="2" height="2"/><rect x="3.500" y="1" width="2" height="2"/><rect x="6.500" y="1" width="2" height="2"/></g></svg>
<div style="left:0;top:574px;width:796px;height:1px;background:#4a4a4a"></div>
<div style="left:0;top:592.500px;width:796px;height:2.500px;background:#3c3c3c"></div>
<div class="sb" style="left:185.2px"></div>
<div class="sb" style="left:202.2px"></div>
<div class="sb" style="left:219.2px"></div>
<div class="sb" style="left:236.2px"></div>
<div class="sb on" style="left:253.2px"></div>
<div class="sb on" style="left:270.2px"></div>
<div class="sb" style="left:287.2px"></div>
<div class="sb on" style="left:304.2px"></div>
<div class="sb on" style="left:321.2px"></div>
<div class="sb on" style="left:338.2px"></div>
<div class="sb" style="left:355.2px"></div>
<div class="sb on" style="left:372.2px"></div>
<div class="sb" style="left:389.2px"></div>
<div class="sb" style="left:406.2px"></div>
<svg style="left:185px;top:575px" width="240" height="18" viewBox="185 577 240 18" fill="none" stroke="#222" stroke-width="1">
<path d="M192.500 579v11M187.500 584.500h10" stroke-width="1.300"/><circle cx="192.500" cy="584.500" r="1.600" fill="#bbb" stroke-width=".8"/><rect x="194.500" y="586.500" width="4" height="4" fill="#e8e8e8" stroke="#c84830" stroke-width=".9"/><rect x="197" y="585" width="2.500" height="2.500" fill="#4a80d0" stroke="none"/>
<g stroke="#444" stroke-dasharray="1 1.200"><path d="M206 581h7M206 583.500h7M206 586h7"/></g><path d="M206 588.500h7" stroke="#333" stroke-width="1.200"/><path d="M214.500 580.500v7.500" stroke="#222" stroke-width="1.300"/>
<g stroke="#3a3a3a" stroke-width=".8"><path d="M222 580h11.500M222 582.500h11.500M222 585h11.500M222 587.500h11.500M222 590h11.500M222.400 580v10M225.200 580v10M228 580v10M230.800 580v10M233.400 580v10"/></g>
<path d="M239.500 579.500v10.500h11" stroke="#333" stroke-width="1.200"/>
<circle cx="260.500" cy="586.200" r="3.800" stroke-width="1.100"/><path d="M256.500 589.500l8-8.500M257.500 586.200h8.500" stroke-width="1.100"/>
<rect x="274.500" y="581.500" width="9.500" height="9.500" rx="1" fill="#f0f4f8" stroke="#5a6068"/><circle cx="273.800" cy="580.300" r="1.500" fill="#fff" stroke="#e07030" stroke-width=".9"/>
<path d="M291.500 582.500h8.500a2 2 0 0 1 2 2v4.500a2 2 0 0 1-2 2h-8.500z" fill="#e4e4e8" stroke="#4a4a50"/><path d="M291.500 582.500l2-2.500h8a2 2 0 0 1 2 2v5l-1.500 2" stroke="#4a4a50"/><circle cx="291" cy="591" r="1.600" fill="#fff" stroke="#e07030" stroke-width=".9"/>
<path d="M318 580.500l-9 8.500h10" stroke="#222" stroke-width="1.200"/>
<path d="M325 579v12h11.500M325.500 590.500l8.500-8.500" stroke="#333" stroke-width="1.100"/><path d="M323.500 580.500l1.500-1.500 1.500 1.500M335 589.500l1.500 1.500-1.500 1.500" stroke="#333" stroke-width=".8"/><path d="M335 578.500l2.500 1.500-2 1.500 1.500 1.500-4.500 1.500 1.500-2.500-1.500-1z" fill="#f0a030" stroke="#c07010" stroke-width=".5"/>
<path d="M341.500 584.500h10.500M346 580.500v4" stroke="#222" stroke-width="1.300"/><rect x="345.500" y="586" width="5.500" height="2.500" rx="1" stroke="#222" stroke-width="1"/>
<path d="M364 580v11M358.500 585.500h11" stroke="#111" stroke-width="2"/>
<rect x="375.500" y="579.500" width="11" height="11.500" fill="#8cc0ec" stroke="#3a78b8"/><path d="M375.500 582.400h11M375.500 585.300h11M375.500 588.200h11M378.300 579.500v11.500M381 579.500v11.500M383.800 579.500v11.500" stroke="#cce4f8" stroke-width=".9"/>
<rect x="394.500" y="581" width="6.500" height="8" fill="#f4f4f4" stroke="#222"/><path d="M394.500 582h6.500" stroke="#222" stroke-width="1.600"/><path d="M396 585h3.500M396 587h3.500" stroke="#444" stroke-width=".8"/>
<path d="M410.500 578.500v5M408 581h5" stroke="#222" stroke-width="1"/><path d="M410.500 583.500v3.500h2.500" stroke="#444" stroke-width=".8"/><rect x="413.500" y="584" width="7.500" height="7" rx="1.500" fill="#6cc060" stroke="#3a7a34"/>
</svg>
<div class="sb" style="left:488.4px;width:32.80000000000007px"></div>
<div class="sb" style="left:521.2px;width:18.09999999999991px"></div>
<div class="sb" style="left:539.3px;width:16.700000000000045px"></div>
<div class="sb" style="left:566px;width:39px"></div>
<div class="sb" style="left:605px;width:16.700000000000045px"></div>
<div class="sb" style="left:621.7px;width:17.09999999999991px"></div>
<div class="sb" style="left:644.4px;width:16.700000000000045px"></div>
<div class="sb" style="left:661.1px;width:17.100000000000023px"></div>
<div class="sb" style="left:678.2px;width:17.09999999999991px"></div>
<div style="left:699.300px;top:576px;width:52px;height:16px;border:1px solid #666;border-bottom-color:#aaa;border-right-color:#aaa;background:linear-gradient(#969696,#8a8a8a)"></div>
<div class="sb" style="left:755px;width:8.5px"></div>
<div class="sb" style="left:763.5px;width:16.5px"></div>
<svg style="left:520px;top:575px" width="276" height="19" viewBox="520 577 276 19" fill="none" stroke="#222" stroke-width="1">
<rect x="525.500" y="580" width="9.500" height="8" fill="#e4e4e4" stroke="#333"/><path d="M527 581.500l5 5.500h-5z" fill="#222" stroke="none"/><path d="M524.500 590.500h11.500" stroke="#333" stroke-width="1.200"/>
<rect x="542.500" y="580" width="5" height="5" fill="#e8e8e8" stroke="#333"/><rect x="548.500" y="580" width="5" height="5" fill="#e8e8e8" stroke="#333"/><path d="M542 587.500h12" stroke="#333" stroke-width="1"/><path d="M542 590h12" stroke="#333" stroke-width="1.300"/>
<path d="M574 579.500l-2.300 6-3.200 4.300 1 .8 4.500-3.800 4.500 3.800 1-.8-3.200-4.300z" fill="#ececec" stroke="#333" stroke-width=".9"/>
<path d="M595.600 583h6l-3 3.300z" fill="#111" stroke="none"/>
<path d="M613 579.500l-2.300 6-3.200 4.300 1 .8 4.500-3.800 4.500 3.800 1-.8-3.200-4.300z" fill="#ececec" stroke="#333" stroke-width=".9"/><path d="M616 584l3.500.3-2 2.700z" fill="#f0b020" stroke="#b07810" stroke-width=".5"/><circle cx="617.500" cy="585.500" r="1.800" fill="#f0b828" stroke="none"/>
<path d="M630.500 579.500l-2.300 6-3.200 4.300 1 .8 4.500-3.800 4.500 3.800 1-.8-3.200-4.300z" fill="#c4c4c4" stroke="#6a6a6a" stroke-width=".9"/><path d="M627 582l7.500 8" stroke="#777" stroke-width="1"/>
</svg>
<svg style="left:640px;top:575px" width="156" height="20" viewBox="640 575.7 156 20" fill="none" stroke="#222" stroke-width="1"><path d="M656.90 583.50 L658.55 584.29 L658.12 585.91 L656.30 585.78 L655.55 586.75 L656.16 588.48 L654.71 589.32 L653.51 587.94 L652.30 588.10 L651.51 589.75 L649.89 589.32 L650.02 587.50 L649.05 586.75 L647.32 587.36 L646.48 585.91 L647.86 584.71 L647.70 583.50 L646.05 582.71 L646.48 581.09 L648.30 581.22 L649.05 580.25 L648.44 578.52 L649.89 577.68 L651.09 579.06 L652.30 578.90 L653.09 577.25 L654.71 577.68 L654.58 579.50 L655.55 580.25 L657.28 579.64 L658.12 581.09 L656.74 582.29Z" fill="#f2f2f2" stroke="#2c2c2c" stroke-width=".9" stroke-linejoin="round"/><circle cx="652.300" cy="583.500" r="2.300" fill="#9c9c9c" stroke="#2c2c2c" stroke-width=".9"/><path d="M656 590.500h3v-3z" fill="#111" stroke="none"/><rect x="664" y="583.300" width="7.400" height="5.600" rx=".8" fill="#f4f4f4" stroke="#2c2c2c" stroke-width="1.100"/><path d="M667.700 584.800v2.600" stroke="#2c2c2c" stroke-width="1.200"/><path d="M669 583.300v-2.300a2.900 2.900 0 0 1 5.800 0v1.200" stroke="#2c2c2c" stroke-width="2.200"/><path d="M669 583.300v-2.300a2.900 2.900 0 0 1 5.800 0v1.200" stroke="#f4f4f4" stroke-width=".8"/>
<rect x="680.500" y="579.500" width="9" height="5" fill="#7c8490" stroke="#3a3e46" stroke-width=".9"/><path d="M682 578v1.500M684 578v1.500M686 578v1.500M688 578v1.500M682 584.500v1.500M684 584.500v1.500M686 584.500v1.500" stroke="#444" stroke-width=".8"/><circle cx="690" cy="584.300" r="2.900" fill="#f8d860" stroke="#d8a020" stroke-width=".7"/><path d="M689 587.500h2v2.500h-2z" fill="#ddd" stroke="#888" stroke-width=".5"/>
<path d="M703.800 589l6.200-6.300a3.400 3.400 0 0 1 4.300-4.300l-2 2 .6 1.700 1.700.6 2-2a3.400 3.400 0 0 1-4.300 4.300l-6.200 6.300a1.600 1.600 0 0 1-2.300-2.300z" fill="#f6f6f6" stroke="#333" stroke-width=".9"/>
<rect x="718.500" y="579" width="10" height="4.500" rx="1" fill="#4a8cd0" stroke="#2a5c98" stroke-width=".7"/><path d="M720 581h4" stroke="#dceeff" stroke-width="1"/><rect x="718.500" y="583.500" width="10.500" height="5.500" fill="#e8d448" stroke="#a89020" stroke-width=".7"/><path d="M723.500 587.500l2 2.300 4.200-5" stroke="#2c9a2c" stroke-width="1.800"/>
<path d="M737.300 585.300a3.900 3.900 0 1 1 5 0l-.9 1.700h-3.200z" fill="#f6eaa4" stroke="#a89440" stroke-width=".8"/><path d="M738.700 587.500h2.400v2.800h-2.400z" fill="#e4e4e4" stroke="#777" stroke-width=".6"/>
<path d="M756.800 583h4.600l-2.300 3.200z" fill="#111" stroke="none"/>
<rect x="766.500" y="578.700" width="10.300" height="9.600" fill="#e6e6e6" stroke="#2c2c2c" stroke-width="1"/><path d="M766.500 579.600h10.300" stroke="#2c2c2c" stroke-width="1.800"/>
<g fill="#ececec" stroke="none"><rect x="790" y="582.800" width="2" height="2"/><rect x="786.600" y="586.300" width="2" height="2"/><rect x="790" y="586.300" width="2" height="2"/><rect x="783.200" y="589.800" width="2" height="2"/><rect x="786.600" y="589.800" width="2" height="2"/><rect x="790" y="589.800" width="2" height="2"/></g>
</svg>
<span class="t" style="left:205.0px;top:6.7px;font-size:10px;color:#1c1c1c;transform:scaleX(0.973);">Drafting &amp; Annotation</span>
<span class="t" style="left:353.5px;top:6.7px;font-size:10px;color:#dcdcdc;transform:scaleX(0.908);">Drawing1.d...</span>
<span class="t" style="left:433.6px;top:8.3px;font-size:10px;color:#707070;transform:scaleX(0.817);font-style:italic;">Type a keyword or phrase</span>
<span class="t" style="left:609.0px;top:8.0px;font-size:10px;color:#e4e4e4;transform:scaleX(0.883);">Sign In</span>
<span class="t" style="left:718.8px;top:6.9px;font-size:10.5px;color:#1c3a9c;transform:scaleX(0.872);font-weight:bold;">?</span>
<span class="t" style="left:46.0px;top:26.0px;font-size:10px;color:#f0f0f0;transform:scaleX(0.868);"><u>F</u>ile</span>
<span class="t" style="left:78.4px;top:26.0px;font-size:10px;color:#f0f0f0;transform:scaleX(0.905);"><u>E</u>dit</span>
<span class="t" style="left:112.5px;top:26.0px;font-size:10px;color:#f0f0f0;transform:scaleX(0.888);"><u>V</u>iew</span>
<span class="t" style="left:150.7px;top:26.0px;font-size:10px;color:#f0f0f0;transform:scaleX(0.907);"><u>I</u>nsert</span>
<span class="t" style="left:192.5px;top:26.0px;font-size:10px;color:#f0f0f0;transform:scaleX(0.900);">F<u>o</u>rmat</span>
<span class="t" style="left:240.0px;top:26.0px;font-size:10px;color:#f0f0f0;transform:scaleX(0.942);"><u>T</u>ools</span>
<span class="t" style="left:281.4px;top:26.0px;font-size:10px;color:#f0f0f0;transform:scaleX(0.882);"><u>D</u>raw</span>
<span class="t" style="left:321.0px;top:26.0px;font-size:10px;color:#f0f0f0;transform:scaleX(0.910);">Dimen<u>s</u>ion</span>
<span class="t" style="left:384.0px;top:26.0px;font-size:10px;color:#f0f0f0;transform:scaleX(0.994);"><u>M</u>odify</span>
<span class="t" style="left:432.0px;top:26.0px;font-size:10px;color:#f0f0f0;transform:scaleX(0.910);"><u>P</u>arametric</span>
<span class="t" style="left:494.4px;top:26.0px;font-size:10px;color:#f0f0f0;transform:scaleX(0.972);"><u>W</u>indow</span>
<span class="t" style="left:548.0px;top:26.0px;font-size:10px;color:#f0f0f0;transform:scaleX(0.908);"><u>H</u>elp</span>
<span class="t" style="left:585.7px;top:26.0px;font-size:10px;color:#f0f0f0;transform:scaleX(0.926);">DyTools(<u>Y</u>)</span>
<span class="t" style="left:649.3px;top:26.0px;font-size:10px;color:#f0f0f0;transform:scaleX(0.822);">E<u>x</u>press</span>
<span class="t" style="left:13.6px;top:41.9px;font-size:10px;color:#f4f4f4;transform:scaleX(0.952);">Home</span>
<span class="t" style="left:54.0px;top:41.9px;font-size:10px;color:#f4f4f4;transform:scaleX(0.899);">Insert</span>
<span class="t" style="left:92.5px;top:41.9px;font-size:10px;color:#f4f4f4;transform:scaleX(0.949);">Annotate</span>
<span class="t" style="left:146.0px;top:41.9px;font-size:10px;color:#f4f4f4;transform:scaleX(0.910);">Parametric</span>
<span class="t" style="left:206.0px;top:41.9px;font-size:10px;color:#f4f4f4;transform:scaleX(0.884);">View</span>
<span class="t" style="left:241.0px;top:41.9px;font-size:10px;color:#222;transform:scaleX(0.913);">Manage</span>
<span class="t" style="left:290.5px;top:41.9px;font-size:10px;color:#f4f4f4;transform:scaleX(0.949);">Output</span>
<span class="t" style="left:335.0px;top:41.9px;font-size:10px;color:#f4f4f4;transform:scaleX(0.941);">Plug-ins</span>
<span class="t" style="left:384.4px;top:41.9px;font-size:10px;color:#f4f4f4;transform:scaleX(0.955);">Online</span>
<span class="t" style="left:427.3px;top:41.9px;font-size:10px;color:#f4f4f4;transform:scaleX(0.871);">Express Tools</span>
<span class="t" style="left:8.8px;top:88.5px;font-size:10px;color:#444;transform:scaleX(0.881);">Record</span>
<span class="t" style="left:88.0px;top:62.7px;font-size:10px;color:#444;transform:scaleX(0.838);">Play</span>
<span class="t" style="left:47.7px;top:118.1px;font-size:10px;color:#444;transform:scaleX(0.911);">Action Recorder</span>
<span class="t" style="left:181.8px;top:74.8px;font-size:8.5px;color:#fff;transform:scaleX(1.079);font-weight:bold;">CUI</span>
<span class="t" style="left:181.4px;top:88.5px;font-size:10px;color:#444;transform:scaleX(0.833);">User</span>
<span class="t" style="left:171.3px;top:100.0px;font-size:10px;color:#444;transform:scaleX(0.922);">Interface</span>
<span class="t" style="left:219.0px;top:88.5px;font-size:10px;color:#444;transform:scaleX(0.959);">Tool</span>
<span class="t" style="left:212.8px;top:100.0px;font-size:10px;color:#444;transform:scaleX(0.855);">Palettes</span>
<span class="t" style="left:266.3px;top:62.8px;font-size:10px;color:#444;transform:scaleX(0.977);">Import</span>
<span class="t" style="left:266.3px;top:80.5px;font-size:10px;color:#444;transform:scaleX(0.889);">Export</span>
<span class="t" style="left:266.3px;top:100.0px;font-size:10px;color:#444;transform:scaleX(0.884);">Edit Aliases</span>
<span class="t" style="left:213.3px;top:118.1px;font-size:10px;color:#444;transform:scaleX(0.923);">Customization</span>
<span class="t" style="left:336.4px;top:88.5px;font-size:10px;color:#444;transform:scaleX(0.903);">Load</span>
<span class="t" style="left:322.6px;top:100.0px;font-size:10px;color:#444;transform:scaleX(0.948);">Application</span>
<span class="t" style="left:378.3px;top:88.5px;font-size:10px;color:#444;transform:scaleX(0.866);">Run</span>
<span class="t" style="left:375.8px;top:100.0px;font-size:10px;color:#444;transform:scaleX(0.868);">Script</span>
<span class="t" style="left:421.8px;top:62.8px;font-size:10px;color:#444;transform:scaleX(0.885);">Visual Basic Editor</span>
<span class="t" style="left:421.8px;top:80.5px;font-size:10px;color:#444;transform:scaleX(0.867);">Visual LISP Editor</span>
<span class="t" style="left:421.8px;top:100.0px;font-size:10px;color:#444;transform:scaleX(0.901);">Run VBA Macro</span>
<span class="t" style="left:378.6px;top:118.1px;font-size:10px;color:#444;transform:scaleX(0.931);">Applications</span>
<span class="t" style="left:523.2px;top:62.8px;font-size:10px;color:#444;transform:scaleX(0.890);">Layer Translator</span>
<span class="t" style="left:523.2px;top:80.5px;font-size:10px;color:#444;transform:scaleX(0.885);">Check</span>
<span class="t" style="left:523.2px;top:100.0px;font-size:10px;color:#444;transform:scaleX(0.932);">Configure</span>
<span class="t" style="left:517.0px;top:118.1px;font-size:10px;color:#444;transform:scaleX(0.869);">CAD Standards</span>
<span class="t" style="left:194.3px;top:171.5px;font-size:17.5px;color:#cc1a1a;transform:scaleX(0.958);">Y</span>
<span class="t" style="left:398.0px;top:272.6px;font-size:17.5px;color:#cc1a1a;transform:scaleX(0.993);">X</span>
<span class="t" style="left:205.6px;top:211.5px;font-size:17.5px;color:#bcf040;transform:scaleX(0.933);">U</span>
<span class="t" style="left:319.6px;top:292.5px;font-size:17.5px;color:#f0e024;transform:scaleX(1.027);">V</span>
<span class="t" style="left:17.0px;top:449.3px;font-size:14.5px;color:#d0d4d8;transform:scaleX(1.075);">Y</span>
<span class="t" style="left:57.9px;top:490.6px;font-size:14.5px;color:#d0d4d8;transform:scaleX(1.106);">X</span>
<span class="t" style="left:8.8px;top:142.0px;font-size:9.5px;color:#f4f4f4;transform:scaleX(0.945);font-weight:bold;">[−] [Top] [2D Wireframe]</span>
<span class="t" style="left:493.0px;top:328.1px;font-size:14px;color:#f2f2f2;transform:scaleX(1.005);">Section Properties</span>
<span class="t" style="left:502.5px;top:346.8px;font-size:11px;color:#f2f2f2;transform:scaleX(0.958);">Item</span>
<span class="t" style="left:654.8px;top:346.8px;font-size:11px;color:#f2f2f2;transform:scaleX(0.976);">Data</span>
<span class="t" style="left:400.0px;top:362.1px;font-size:11px;color:#f2f2f2;transform:scaleX(0.962);">A   Area (mm^2)</span>
<span class="t" style="left:656.8px;top:362.1px;font-size:11px;color:#f2f2f2;transform:scaleX(0.987);">11658.34</span>
<span class="t" style="left:399.0px;top:377.4px;font-size:11px;color:#f2f2f2;transform:scaleX(0.945);">Ix  Geometrical moment of inertia (mm^ 4)</span>
<span class="t" style="left:640.3px;top:377.4px;font-size:11px;color:#f2f2f2;transform:scaleX(0.950);">10786368.05</span>
<span class="t" style="left:399.0px;top:392.6px;font-size:11px;color:#f2f2f2;transform:scaleX(0.945);">Iy  Geometrical moment of inertia (mm^ 4)</span>
<span class="t" style="left:640.3px;top:392.6px;font-size:11px;color:#f2f2f2;transform:scaleX(0.950);">40384383.29</span>
<span class="t" style="left:399.0px;top:407.7px;font-size:11px;color:#f2f2f2;transform:scaleX(0.967);">Zx  Section modulus (mm^3)</span>
<span class="t" style="left:651.3px;top:407.7px;font-size:11px;color:#f2f2f2;transform:scaleX(0.962);">191282.79</span>
<span class="t" style="left:399.0px;top:422.8px;font-size:11px;color:#f2f2f2;transform:scaleX(0.967);">Zy  Section modulus (mm^3)</span>
<span class="t" style="left:651.3px;top:422.8px;font-size:11px;color:#f2f2f2;transform:scaleX(0.962);">376236.03</span>
<span class="t" style="left:399.0px;top:438.2px;font-size:11px;color:#f2f2f2;transform:scaleX(0.957);">ix  Radius of gyration of area (mm)</span>
<span class="t" style="left:674.3px;top:438.2px;font-size:11px;color:#f2f2f2;transform:scaleX(0.981);">30.42</span>
<span class="t" style="left:399.0px;top:453.4px;font-size:11px;color:#f2f2f2;transform:scaleX(0.957);">iy  Radius of gyration of area (mm)</span>
<span class="t" style="left:674.3px;top:453.4px;font-size:11px;color:#f2f2f2;transform:scaleX(0.981);">58.86</span>
<span class="t" style="left:399.0px;top:468.6px;font-size:11px;color:#f2f2f2;transform:scaleX(0.960);">Iu  Principal moment of inertia (mm^4)</span>
<span class="t" style="left:640.3px;top:468.6px;font-size:11px;color:#f2f2f2;transform:scaleX(0.962);">41159934.27</span>
<span class="t" style="left:61.6px;top:516.0px;font-size:9.5px;color:#fff;transform:scaleX(0.835);">Model</span>
<span class="t" style="left:98.0px;top:516.0px;font-size:9.5px;color:#222;transform:scaleX(0.816);">Layout1</span>
<span class="t" style="left:140.2px;top:516.0px;font-size:9.5px;color:#222;transform:scaleX(0.846);">Layout2</span>
<span class="t" style="left:16.3px;top:533.7px;font-size:10px;color:#1c1c1c;font-family:'Liberation Mono',monospace;transform:scaleX(0.904);">Command: *Cancel*</span>
<span class="t" style="left:16.3px;top:544.5px;font-size:10px;color:#1c1c1c;font-family:'Liberation Mono',monospace;transform:scaleX(0.904);">Command: *Cancel*</span>
<span class="t" style="left:16.3px;top:565.3px;font-size:10px;color:#1c1c1c;font-family:'Liberation Mono',monospace;transform:scaleX(0.904);">Command:</span>
<span class="t" style="left:12.6px;top:580.0px;font-size:10px;color:#1a1a1a;transform:scaleX(0.841);">362252.1380, 152333.4511, 0.0000</span>
<span class="t" style="left:490.3px;top:579.8px;font-size:9.5px;color:#111;transform:scaleX(0.843);">MODEL</span>
<span class="t" style="left:581.8px;top:579.8px;font-size:9.5px;color:#111;transform:scaleX(0.862);">1:1</span>
</div>
</body></html>
